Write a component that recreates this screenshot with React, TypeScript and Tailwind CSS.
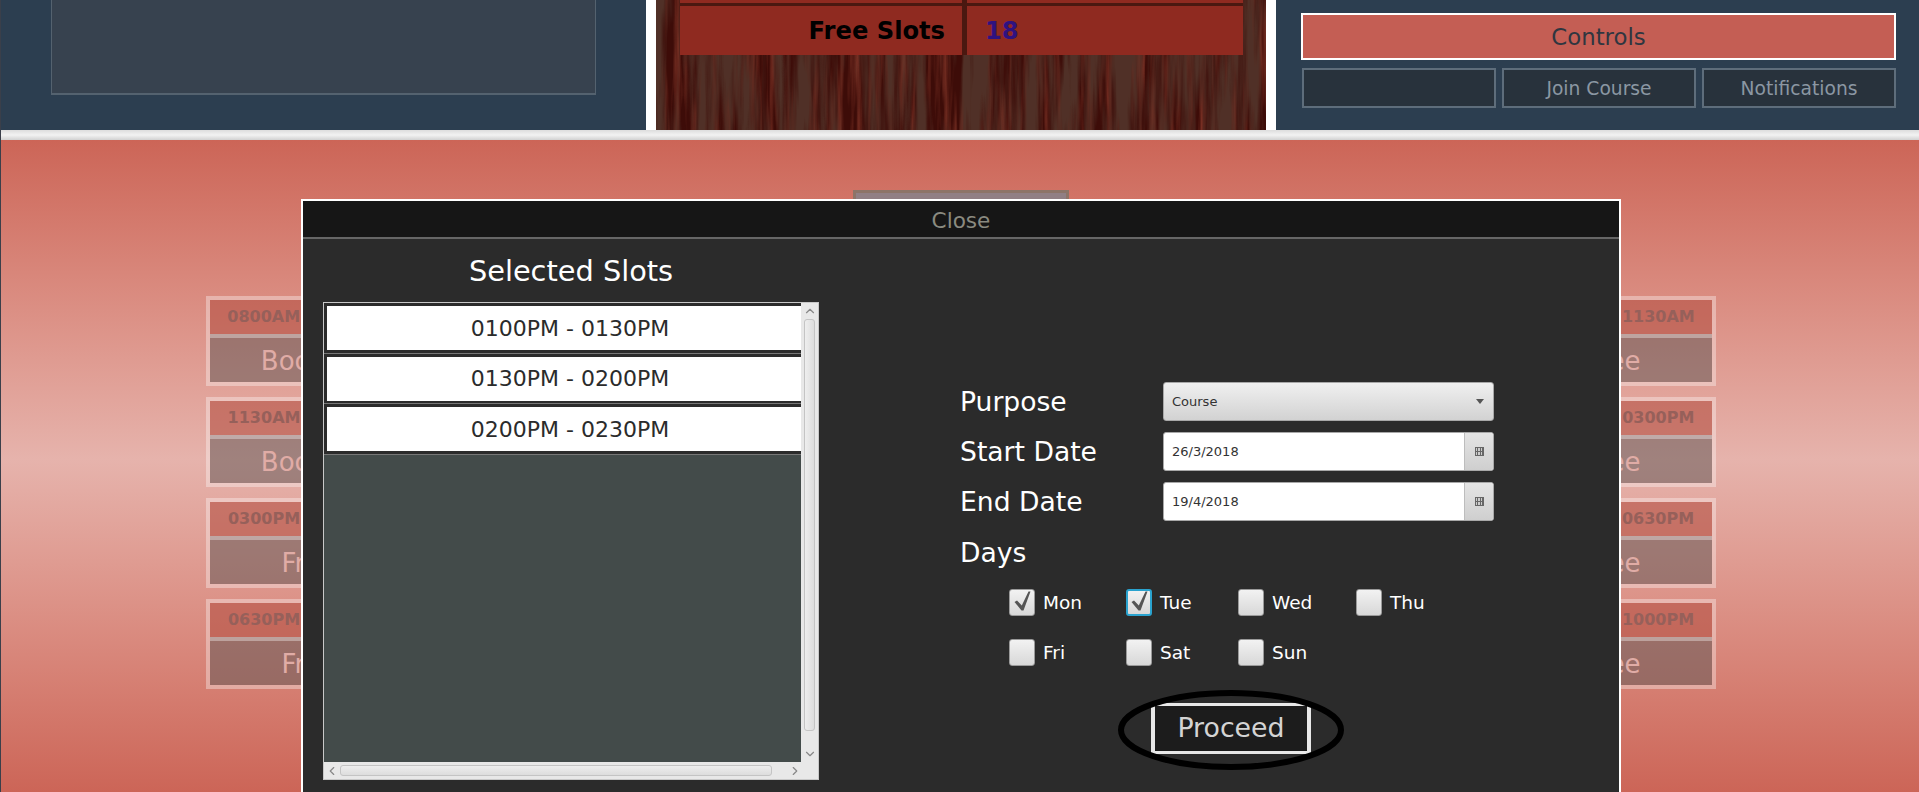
import React from 'react';
import { ChevronUp, ChevronDown, ChevronLeft, ChevronRight } from 'lucide-react';

const font = 'font-["DejaVu_Sans",sans-serif]';

const timeRows = [
  { time: '0800AM - 1130AM', left: 'Booked' },
  { time: '1130AM - 0300PM', left: 'Booked' },
  { time: '0300PM - 0630PM', left: 'Free' },
  { time: '0630PM - 1000PM', left: 'Free' },
];

const slots = ['0100PM - 0130PM', '0130PM - 0200PM', '0200PM - 0230PM'];

const SlotCell = ({ time, status }: { time: string; status: string }) => (
  <div className="flex h-[90px] w-[206px] flex-col border-4 border-white/35">
    <div className="flex h-[34px] items-center justify-center whitespace-nowrap bg-[rgba(180,80,67,0.6)] text-[16px] font-bold text-[#96605a]">
      {time}
    </div>
    <div className="flex h-[48px] items-center justify-center border-t-4 border-white/35 bg-[rgba(102,90,87,0.55)] pt-[3px] text-[26px] text-[#e0aca6]">
      {status}
    </div>
  </div>
);

const WoodTexture = () => (
  <svg className="absolute inset-0 h-full w-full" aria-hidden="true">
    <filter id="wood-dark" x="0" y="0" width="100%" height="100%">
      <feTurbulence type="fractalNoise" baseFrequency="0.08 0.006" numOctaves="4" seed="11" />
      <feColorMatrix
        type="matrix"
        values="0 0 0 0 0.08  0 0 0 0 0.03  0 0 0 0 0.02  3 0 0 0 -1.05"
      />
    </filter>
    <filter id="wood-light" x="0" y="0" width="100%" height="100%">
      <feTurbulence type="fractalNoise" baseFrequency="0.16 0.01" numOctaves="3" seed="4" />
      <feColorMatrix
        type="matrix"
        values="0 0 0 0 0.38  0 0 0 0 0.07  0 0 0 0 0.04  1.3 0 0 0 -0.55"
      />
    </filter>
    <rect width="100%" height="100%" fill="#3d0c08" />
    <rect width="100%" height="100%" filter="url(#wood-light)" />
    <rect width="100%" height="100%" filter="url(#wood-dark)" />
  </svg>
);

const Checkbox = ({ label, checked, focused }: { label: string; checked?: boolean; focused?: boolean }) => (
  <div className="flex items-center gap-[8px]">
    <div
      className={`h-[27px] w-[26px] rounded-[3px] bg-linear-to-b from-[#f2f2f2] to-[#d8d8d8] ${
        focused ? 'border-2 border-[#2aa3cf]' : 'border border-[#9a9a9a]'
      }`}
    >
      {checked && (
        <svg
          className={focused ? '-ml-[2px] -mt-[2px]' : '-ml-px -mt-px'}
          width="26"
          height="27"
          viewBox="0 0 26 27"
        >
          <path d="M5.5 13 L8 11.5 L12.8 16.5 L19.5 2.5 L21.5 2.5 L14.5 21.5 L12.5 21.5 Z" fill="#555" />
        </svg>
      )}
    </div>
    <span className="text-[18.5px] text-white">{label}</span>
  </div>
);

const DateField = ({ value }: { value: string }) => (
  <div className="flex h-[39px] w-[331px] overflow-hidden rounded-[3px] border border-[#a8a8a8] bg-white">
    <div className="flex flex-1 items-center pl-2 text-[13px] text-[#333]">{value}</div>
    <div className="flex w-[29px] items-center justify-center border-l border-[#bdbdbd] bg-linear-to-b from-[#e4e4e4] to-[#cfcfcf]">
      <div className="grid h-[9px] w-[9px] grid-cols-3 gap-px bg-[#666] p-px">
        {Array.from({ length: 6 }).map((_, i) => (
          <span key={i} className="bg-[#ccc]" />
        ))}
      </div>
    </div>
  </div>
);

export default function App() {
  return (
    <div className={`relative flex h-[792px] w-full flex-col overflow-hidden border-l border-[#3a3f4a] bg-white ${font}`}>
      {/* top panels */}
      <div className="flex h-[130px] shrink-0">
        <div className="w-[645px] bg-[#2c3e50] pl-[50px]">
          <div className="h-[95px] w-[545px] border-x border-b-2 border-[#54626f] bg-[#37424f]" />
        </div>
        <div className="ml-[10px] w-[610px] border-0">
          <div className="relative h-[130px] w-[610px] overflow-hidden">
            <WoodTexture />
            <div className="relative ml-[24px] flex h-[3px] w-[563px] gap-[5px] bg-[#4a1810]">
              <div className="w-[282px] bg-[#8f2a20]" />
              <div className="flex-1 bg-[#8f2a20]" />
            </div>
            <div className="relative ml-[24px] flex h-[52px] w-[563px] gap-[5px] bg-[#4a1810] pt-[3px] text-[24.2px] font-bold">
              <div className="flex w-[282px] items-center justify-end bg-[#8f2a20] pr-[17px] pt-[2px] text-black">Free Slots</div>
              <div className="flex flex-1 items-center bg-[#8f2a20] pl-[18px] pt-[2px] text-[#2f1280]">18</div>
            </div>
          </div>
        </div>
        <div className="ml-[10px] flex flex-1 flex-col bg-[#2c3e50] pl-[25px] pr-[23px] pt-[13px]">
          <div className="flex h-[47px] items-center justify-center border-2 border-white bg-[#c45e54] pt-[2px] text-[22.8px] text-[#2f3640]">
            Controls
          </div>
          <div className="ml-[1px] mt-[8px] flex h-[40px] gap-[6px] text-[18.7px] text-[#8b97a3]">
            {['', 'Join Course', 'Notifications'].map((label, i) => (
              <div key={i} className="flex flex-1 items-center justify-center border-2 border-[#5e6d7b] bg-[#28323c] pt-[2px]">
                {label}
              </div>
            ))}
          </div>
        </div>
      </div>

      <div className="h-[10px] shrink-0 bg-linear-to-b from-[#dddddd] via-[#f2f2f2] to-[#d2d2d2]" />

      {/* schedule behind the dialog */}
      <div className="relative flex-1 bg-linear-to-b from-[#cc6557] via-[#e6b3ac] via-[49%] to-[#cc6557]">
        <div className="mx-auto h-[9px] w-[216px] translate-x-[1px] translate-y-[50px] border-x-[3px] border-t-[3px] border-[#8d7468] bg-[#917f84]" />
        <div className="ml-[205px] mt-[147px] flex w-[1510px] flex-col gap-[11px]">
          {timeRows.map((row) => (
            <div key={row.time} className="flex justify-between">
              <SlotCell time={row.time} status={row.left} />
              <SlotCell time={row.time} status="Free" />
            </div>
          ))}
        </div>
      </div>

      {/* dialog */}
      <div className="absolute left-[300px] top-[199px] h-[640px] w-[1320px] border-2 border-white bg-[#2b2b2b] text-white">
        <div className="flex h-[38px] items-center justify-center border-b-2 border-[#666] bg-[#161616] pt-[4px] text-[21.6px] text-[#8a8a80]">
          Close
        </div>
        <div className="flex">
          <div className="ml-[20px] w-[496px]">
            <div className="flex h-[63px] items-center justify-center pt-[2px] text-[28.8px]">Selected Slots</div>
            <div className="flex h-[478px] flex-col border border-[#c8c8c8] bg-[#e8e8e8]">
              <div className="flex min-h-0 flex-1">
                <div className="flex-1 bg-[#434b4a] text-[22px] text-[#2b2b2b]">
                  {slots.map((slot) => (
                    <div key={slot} className="h-[50.5px] border-b border-[#777] bg-[#2b2b2b] py-[3px] pl-[3px]">
                      <div className="flex h-[44px] items-center justify-center bg-white pl-[12px]">{slot}</div>
                    </div>
                  ))}
                </div>
                <div className="flex w-[17px] flex-col items-center text-[#888]">
                  <ChevronUp size={14} className="mt-[1px] shrink-0" />
                  <div className="mt-[1px] w-[11px] flex-1 rounded-[3px] border border-[#c4c4c4] bg-linear-to-r from-[#eeeeee] to-[#dddddd]" />
                  <ChevronDown size={14} className="mb-[1px] mt-[16px] shrink-0" />
                </div>
              </div>
              <div className="flex h-[17px] items-center text-[#888]">
                <ChevronLeft size={14} className="ml-[1px] shrink-0" />
                <div className="ml-[1px] h-[11px] w-[432px] rounded-[3px] border border-[#c4c4c4] bg-linear-to-b from-[#eeeeee] to-[#dddddd]" />
                <ChevronRight size={14} className="ml-[16px] shrink-0" />
              </div>
            </div>
          </div>

          <div className="ml-[141px] pt-[143px]">
            <div className="grid grid-cols-[203px_331px] items-center gap-y-[11px] text-[26.6px] leading-none">
              <span className="pt-[2px]">Purpose</span>
              <div className="flex h-[39px] items-center justify-between rounded-[3px] border border-[#a8a8a8] bg-linear-to-b from-[#f0f0f0] to-[#d2d2d2] px-2 text-[13px] text-[#333]">
                Course
                <span className="mr-[1px] h-0 w-0 border-x-4 border-t-[5px] border-x-transparent border-t-[#555]" />
              </div>
              <span className="pt-[2px]">Start Date</span>
              <DateField value="26/3/2018" />
              <span className="pt-[2px]">End Date</span>
              <DateField value="19/4/2018" />
            </div>
            <div className="mt-[16px] text-[26.6px] leading-[32px]">Days</div>
            <div className="ml-[49px] mt-[20px] grid grid-cols-[117px_112px_118px_auto] gap-y-[22px]">
              <Checkbox label="Mon" checked />
              <Checkbox label="Tue" checked focused />
              <Checkbox label="Wed" />
              <Checkbox label="Thu" />
              <Checkbox label="Fri" />
              <Checkbox label="Sat" />
              <Checkbox label="Sun" />
            </div>
            <div className="relative ml-[191px] mt-[36px] flex h-[51px] w-[160px] items-center justify-center border-x-4 border-y-[3px] border-[#e8e8e8] bg-[#1c1c1c] text-[26.8px] text-[#d4d4d4]">
              Proceed
              <svg className="absolute left-[-37px] top-[-17px] overflow-visible" width="226" height="82" viewBox="0 0 226 82" aria-hidden="true">
                <ellipse cx="113" cy="41" rx="110" ry="37" fill="none" stroke="#000" strokeWidth="6" />
              </svg>
            </div>
          </div>
        </div>
      </div>
    </div>
  );
}
